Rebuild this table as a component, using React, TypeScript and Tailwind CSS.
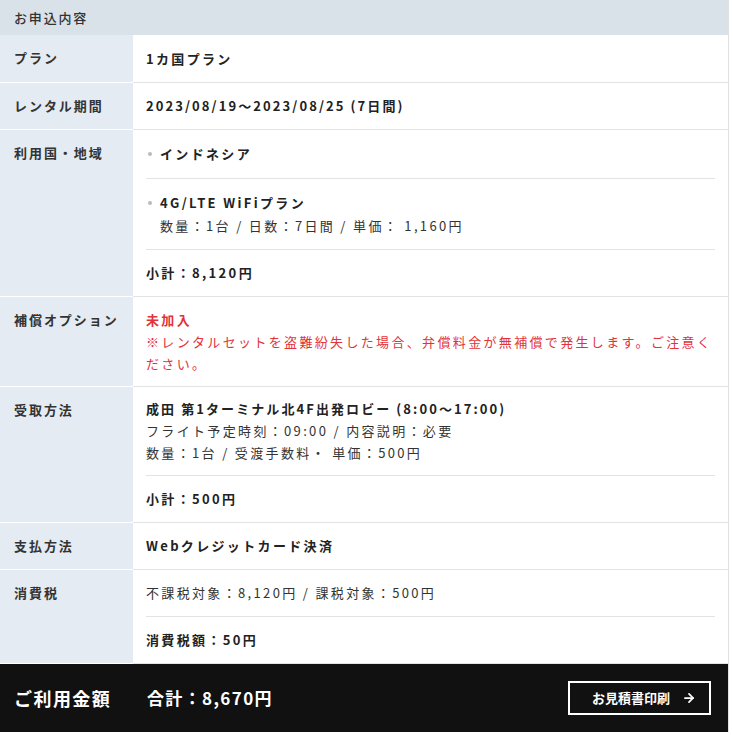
import React from "react";
import { ArrowRight } from "lucide-react";

const FONT = { fontFamily: '"Noto Sans CJK JP", "Noto Sans", sans-serif' };

const Row: React.FC<{ label: string; children: React.ReactNode }> = ({ label, children }) => (
  <div className="flex items-stretch">
    <div className="w-[133px] shrink-0 bg-[#e4ebf2] border-b border-white px-[14px] py-3 text-[13px] leading-[22px] font-bold tracking-[0.15em] text-[#333]">
      {label}
    </div>
    <div className="flex-1 border-b border-[#e3e3e3] px-[13px]">{children}</div>
  </div>
);

const Block: React.FC<{ last?: boolean; pad?: string; children: React.ReactNode }> = ({ last, pad, children }) => (
  <div className={(pad ?? "py-3") + (last ? "" : " border-b border-[#e3e3e3]")}>{children}</div>
);

const Bullet: React.FC<{ children: React.ReactNode }> = ({ children }) => (
  <div className="flex items-center leading-[24px] font-bold text-[#222]">
    <span className="w-[4px] h-[4px] rounded-full bg-[#b5bcc4] ml-[2px] mr-[8px]" />
    {children}
  </div>
);

export default function App() {
  return (
    <div className="w-[729px] bg-white border-r border-[#e0e0e0]" style={FONT}>
      <div className="h-[35px] bg-[#dae2e9] flex items-center px-[14px] text-[13px] font-medium tracking-[0.14em] text-[#333]">
        お申込内容
      </div>

      <div className="text-[13px] leading-[22px] tracking-[0.18em] text-[#333]">
        <Row label="プラン">
          <Block last pad="pt-[13px] pb-3">
            <p className="font-bold text-[#222]">1カ国プラン</p>
          </Block>
        </Row>
        <Row label="レンタル期間">
          <Block last>
            <p className="font-bold text-[#222] tracking-[0.16em]">2023/08/19〜2023/08/25 (7日間)</p>
          </Block>
        </Row>
        <Row label="利用国・地域">
          <Block>
            <Bullet>インドネシア</Bullet>
          </Block>
          <Block>
            <Bullet>4G/LTE WiFiプラン</Bullet>
            <p className="pl-[14px]">数量：1台 / 日数：7日間 / 単価： 1,160円</p>
          </Block>
          <Block last>
            <p className="font-bold text-[#222]">小計：8,120円</p>
          </Block>
        </Row>
        <Row label="補償オプション">
          <Block last pad="pt-3 pb-[11px]">
            <p className="font-bold text-[#e2333a]">未加入</p>
            <p className="text-[#e2333a]">
              ※レンタルセットを盗難紛失した場合、弁償料金が無補償で発生します。ご注意ください。
            </p>
          </Block>
        </Row>
        <Row label="受取方法">
          <Block pad="py-[11px]">
            <p className="font-bold text-[#222] tracking-[0.16em]">成田 第1ターミナル北4F出発ロビー (8:00〜17:00)</p>
            <p>フライト予定時刻：09:00 / 内容説明：必要</p>
            <p>数量：1台 / 受渡手数料・ 単価：500円</p>
          </Block>
          <Block last>
            <p className="font-bold text-[#222]">小計：500円</p>
          </Block>
        </Row>
        <Row label="支払方法">
          <Block last>
            <p className="font-bold text-[#222]">Webクレジットカード決済</p>
          </Block>
        </Row>
        <Row label="消費税">
          <Block>
            <p>不課税対象：8,120円 / 課税対象：500円</p>
          </Block>
          <Block last>
            <p className="font-bold text-[#222]">消費税額：50円</p>
          </Block>
        </Row>
      </div>

      <div className="h-[68px] bg-[#111111] flex items-center pl-[14px] pr-[17px] text-white">
        <span className="text-[18px] font-bold tracking-[0.08em] w-[133px]">ご利用金額</span>
        <span className="text-[17px] font-bold tracking-[0.08em]">合計：8,670円</span>
        <button className="ml-auto w-[143px] h-[34px] border-2 border-white flex items-center justify-end pr-[13px] gap-[12px] text-[13px] font-bold text-white">
          お見積書印刷
          <ArrowRight size={14} strokeWidth={3} />
        </button>
      </div>
    </div>
  );
}
